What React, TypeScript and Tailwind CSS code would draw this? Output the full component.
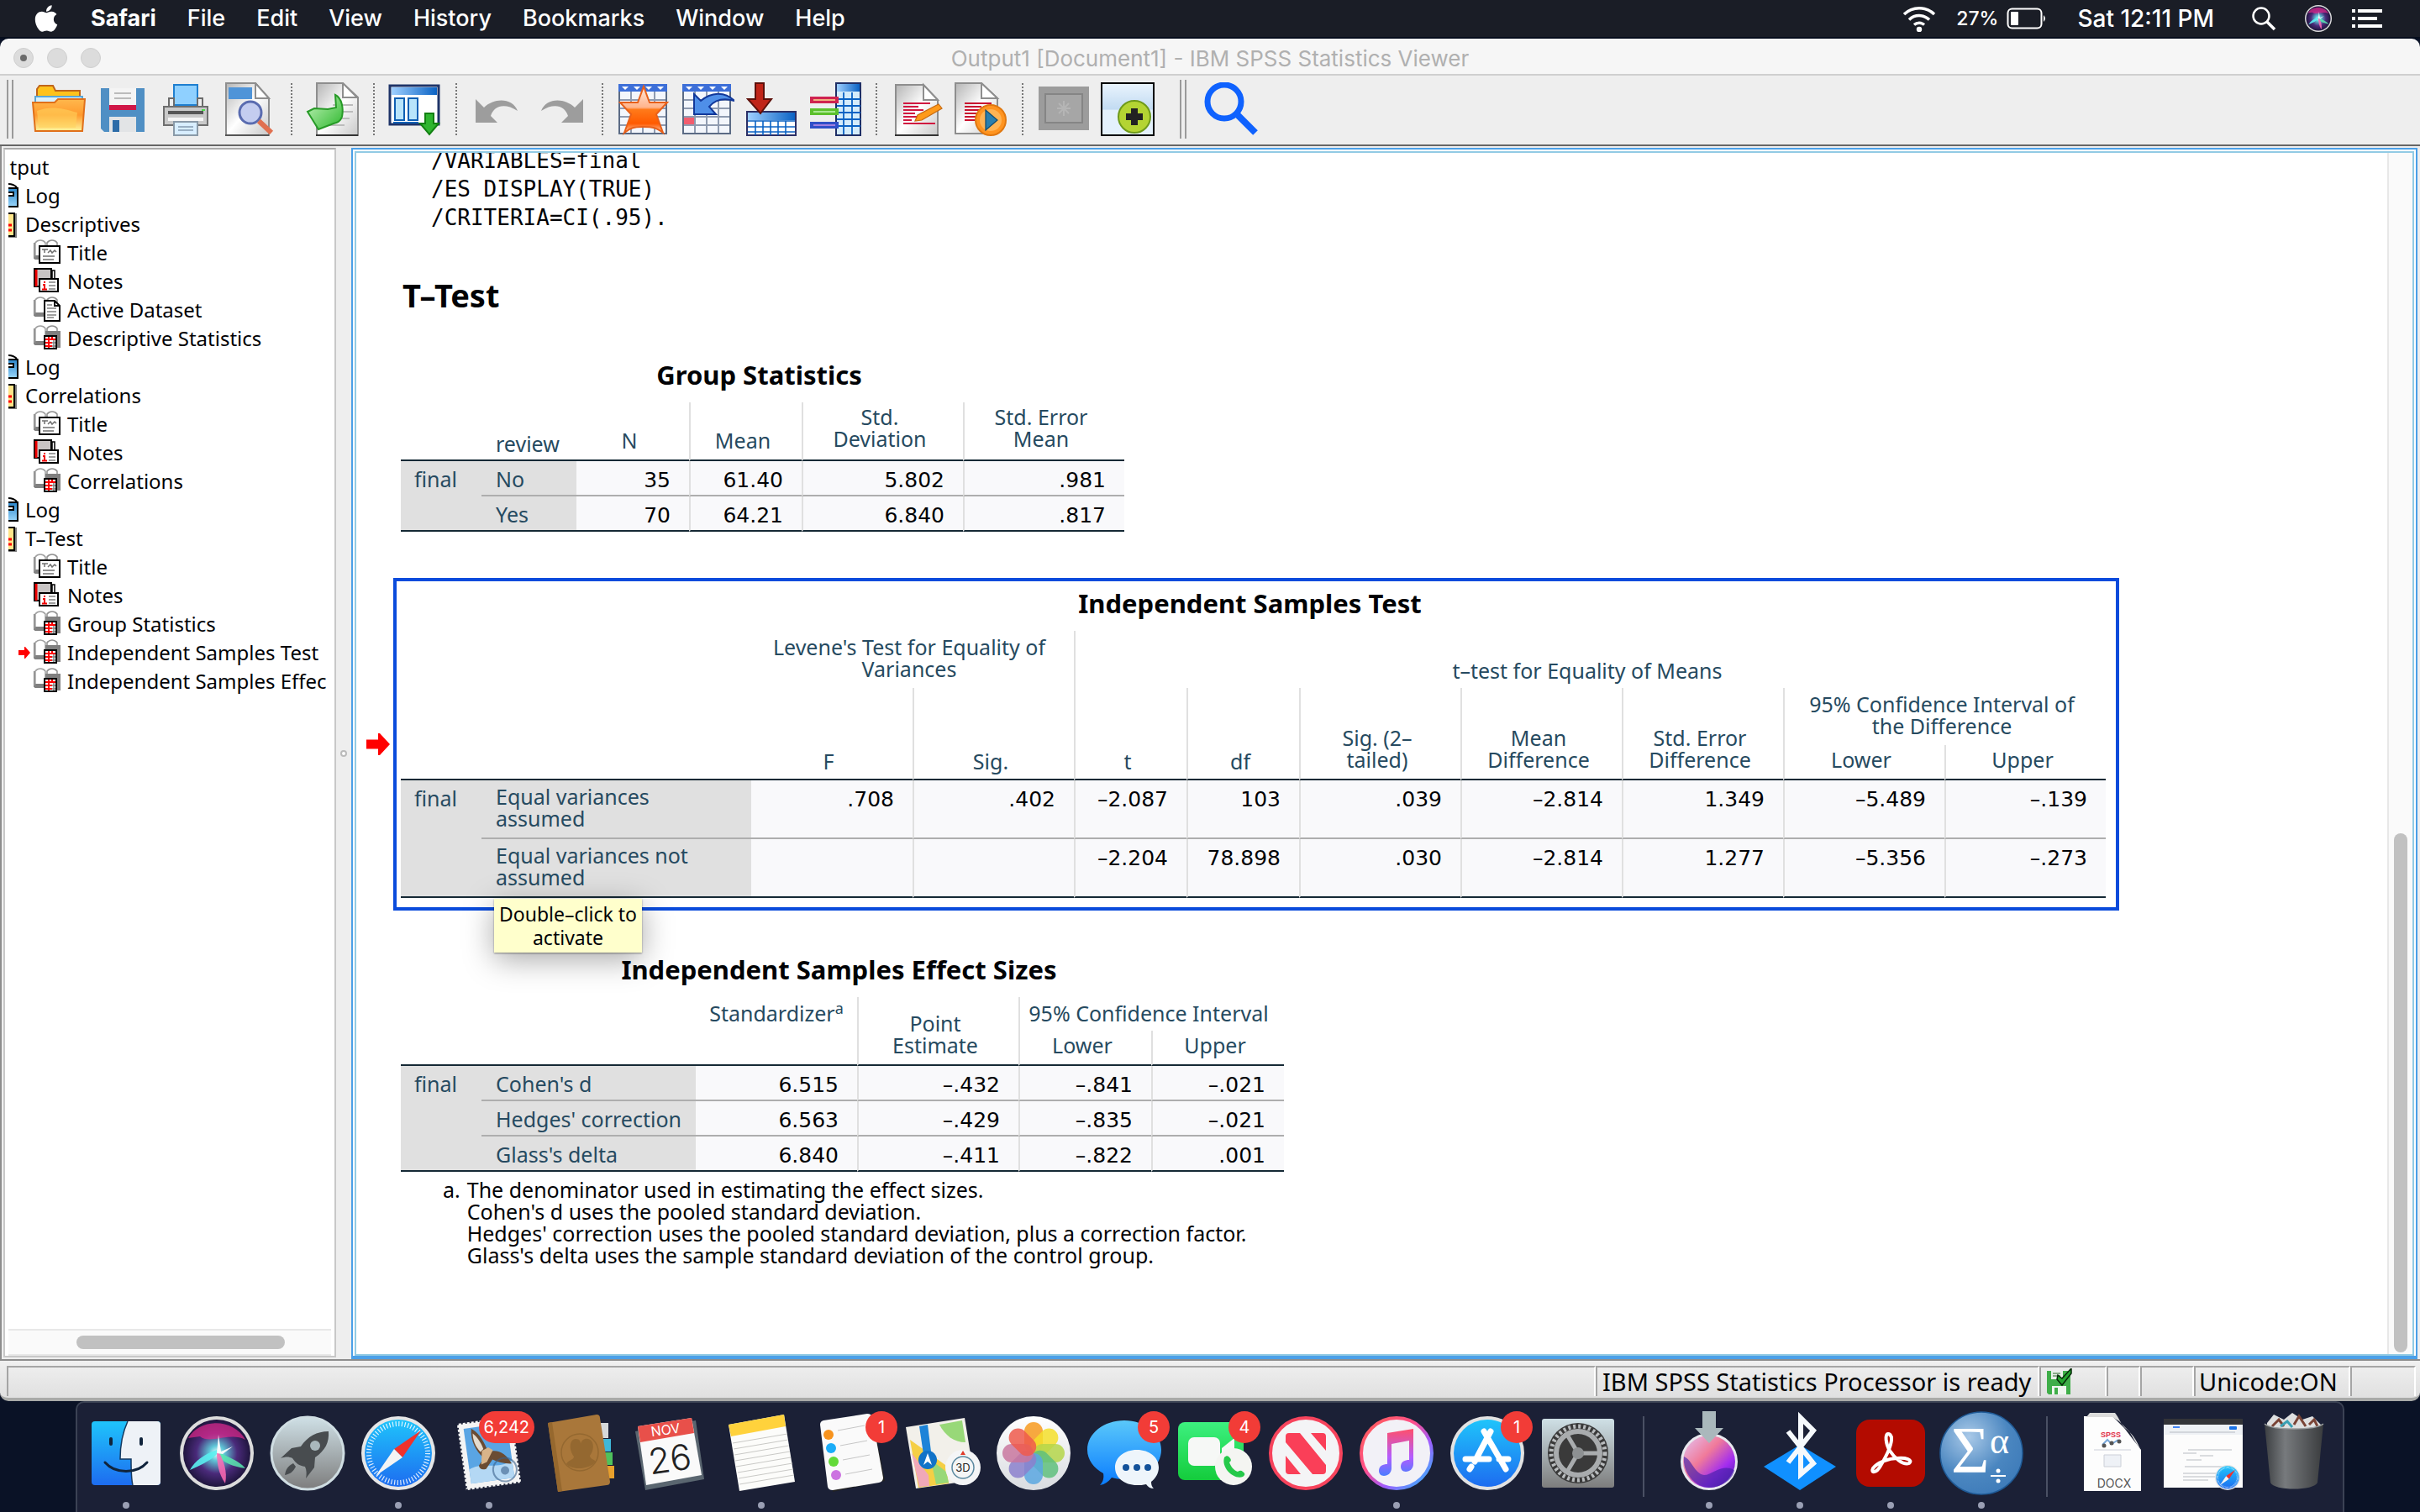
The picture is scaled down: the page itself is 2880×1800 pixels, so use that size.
import { ReactNode } from "react";
import { FaApple } from "react-icons/fa";

const MENUS = ["File", "Edit", "View", "History", "Bookmarks", "Window", "Help"];

type TreeKind = "root" | "log" | "book" | "title" | "notes" | "dataset" | "table";

const TREE: { kind: TreeKind; label: string; current?: boolean }[] = [
  { kind: "root", label: "Output" },
  { kind: "log", label: "Log" },
  { kind: "book", label: "Descriptives" },
  { kind: "title", label: "Title" },
  { kind: "notes", label: "Notes" },
  { kind: "dataset", label: "Active Dataset" },
  { kind: "table", label: "Descriptive Statistics" },
  { kind: "log", label: "Log" },
  { kind: "book", label: "Correlations" },
  { kind: "title", label: "Title" },
  { kind: "notes", label: "Notes" },
  { kind: "table", label: "Correlations" },
  { kind: "log", label: "Log" },
  { kind: "book", label: "T–Test" },
  { kind: "title", label: "Title" },
  { kind: "notes", label: "Notes" },
  { kind: "table", label: "Group Statistics" },
  { kind: "table", label: "Independent Samples Test", current: true },
  { kind: "table", label: "Independent Samples Effec" },
];

type HeadCell = {
  text: ReactNode;
  colSpan?: number;
  rowSpan?: number;
  line?: boolean;
  open?: boolean; // no rule under the cell
  className?: string;
};

type PivotTable = {
  title: string;
  widths: number[];
  head: HeadCell[][];
  rowHeight: string;
  labelPad: string;
  rows: { label: string; values: string[] }[];
};

const GROUP_STATS: PivotTable = {
  title: "Group Statistics",
  widths: [96, 113, 134, 134, 192, 192],
  rowHeight: "h-[42px]",
  labelPad: "pt-2",
  head: [
    [
      { text: "", className: "h-[70px]" },
      { text: "review", className: "text-left pl-[17px] pb-[6px]" },
      { text: "N", className: "pr-2 pb-[10px]" },
      { text: "Mean", line: true, className: "pr-2 pb-[10px]" },
      { text: "Std.\nDeviation", line: true, className: "pr-2 pb-3" },
      { text: "Std. Error\nMean", line: true, className: "pr-2 pb-3" },
    ],
  ],
  rows: [
    { label: "No", values: ["35", "61.40", "5.802", ".981"] },
    { label: "Yes", values: ["70", "64.21", "6.840", ".817"] },
  ],
};

const SAMPLES_TEST: PivotTable = {
  title: "Independent Samples Test",
  widths: [96, 321, 192, 192, 134, 134, 192, 192, 192, 192, 192],
  rowHeight: "h-[70px]",
  labelPad: "pt-[6px]",
  head: [
    [
      { text: "", colSpan: 2, rowSpan: 3 },
      {
        text: "Levene's Test for Equality of\nVariances",
        colSpan: 2,
        open: true,
        className: "h-[68px] pr-2 pb-[10px]",
      },
      { text: "t–test for Equality of Means", colSpan: 7, line: true, open: true, className: "pr-2 pb-2" },
    ],
    [
      { text: "F", rowSpan: 2, className: "pr-2 pb-2" },
      { text: "Sig.", rowSpan: 2, line: true, className: "pr-2 pb-2" },
      { text: "t", rowSpan: 2, line: true, className: "pr-2 pb-2" },
      { text: "df", rowSpan: 2, line: true, className: "pr-2 pb-2" },
      { text: "Sig. (2–\ntailed)", rowSpan: 2, line: true, className: "pr-2 pb-[10px]" },
      { text: "Mean\nDifference", rowSpan: 2, line: true, className: "pr-2 pb-[10px]" },
      { text: "Std. Error\nDifference", rowSpan: 2, line: true, className: "pr-2 pb-[10px]" },
      {
        text: "95% Confidence Interval of\nthe Difference",
        colSpan: 2,
        line: true,
        open: true,
        className: "h-[68px] pr-2 pb-[10px]",
      },
    ],
    [
      { text: "Lower", line: true, className: "h-[42px] pr-2 pb-[10px]" },
      { text: "Upper", line: true, className: "pr-2 pb-[10px]" },
    ],
  ],
  rows: [
    {
      label: "Equal variances\nassumed",
      values: [".708", ".402", "–2.087", "103", ".039", "–2.814", "1.349", "–5.489", "–.139"],
    },
    {
      label: "Equal variances not\nassumed",
      values: ["", "", "–2.204", "78.898", ".030", "–2.814", "1.277", "–5.356", "–.273"],
    },
  ],
};

const EFFECT_SIZES: PivotTable = {
  title: "Independent Samples Effect Sizes",
  widths: [96, 255, 192, 192, 158, 158],
  rowHeight: "h-[42px]",
  labelPad: "pt-2",
  head: [
    [
      { text: "", colSpan: 2, rowSpan: 2 },
      {
        text: (
          <>
            Standardizer<sup className="text-[18px]">a</sup>
          </>
        ),
        rowSpan: 2,
        className: "align-top pt-[6px]",
      },
      { text: "Point\nEstimate", rowSpan: 2, line: true, className: "align-bottom pr-2 pb-[10px]" },
      { text: "95% Confidence Interval", colSpan: 2, line: true, open: true, className: "h-10 pr-2 pb-2" },
    ],
    [
      { text: "Lower", line: true, className: "h-[42px] pr-2 pb-[10px]" },
      { text: "Upper", line: true, className: "pr-2 pb-[10px]" },
    ],
  ],
  rows: [
    { label: "Cohen's d", values: ["6.515", "–.432", "–.841", "–.021"] },
    { label: "Hedges' correction", values: ["6.563", "–.429", "–.835", "–.021"] },
    { label: "Glass's delta", values: ["6.840", "–.411", "–.822", ".001"] },
  ],
};

function StatTable({ table }: { table: PivotTable }) {
  return (
    <table className="table-fixed border-separate border-spacing-0 text-[25px] leading-[26px]">
      <caption className="mb-[13px] pr-2 text-[31px] leading-10 font-bold text-[#010205]">{table.title}</caption>
      <colgroup>
        {table.widths.map((w, i) => (
          <col key={i} style={{ width: w }} />
        ))}
      </colgroup>
      <thead className="align-bottom text-[#264a60]">
        {table.head.map((row, r) => (
          <tr key={r}>
            {row.map((cell, c) => (
              <th
                key={c}
                colSpan={cell.colSpan}
                rowSpan={cell.rowSpan}
                className={`font-normal whitespace-pre ${cell.open ? "" : "border-b-2 border-b-[#152935]"} ${
                  cell.line ? "border-l-2 border-l-[#e0e0e0]" : ""
                } ${cell.className ?? ""}`}
              >
                {cell.text}
              </th>
            ))}
          </tr>
        ))}
      </thead>
      <tbody>
        {table.rows.map((row, r) => {
          const last = r === table.rows.length - 1;
          const rule = last ? "border-b-2 border-b-[#152935]" : "border-b-2 border-b-[#aeaeae]";
          return (
            <tr key={row.label} className={table.rowHeight}>
              {r === 0 && (
                <th
                  rowSpan={table.rows.length}
                  className="border-b-2 border-b-[#152935] bg-[#e0e0e0] pt-2 pl-4 text-left align-top font-normal text-[#264a60]"
                >
                  final
                </th>
              )}
              <th
                className={`bg-[#e0e0e0] pl-[17px] text-left align-top font-normal whitespace-pre text-[#264a60] ${table.labelPad} ${rule}`}
              >
                {row.label}
              </th>
              {row.values.map((value, c) => (
                <td
                  key={c}
                  className={`bg-[#f9f9fb] pt-[10px] pr-[22px] text-right align-top font-['DejaVu_Sans',sans-serif] text-[#010205] ${rule} ${
                    c > 0 ? "border-l-2 border-l-[#e0e0e0]" : ""
                  }`}
                >
                  {value}
                </td>
              ))}
            </tr>
          );
        })}
      </tbody>
    </table>
  );
}

/* ---------- shared gradients ---------- */

function Gradients() {
  return (
    <svg className="absolute h-0 w-0" aria-hidden="true">
      <defs>
        <linearGradient id="gFolder" x1="0" y1="0" x2="0" y2="1">
          <stop offset="0" stopColor="#ffb84d" />
          <stop offset=".5" stopColor="#ff9a2e" />
          <stop offset="1" stopColor="#fff59a" />
        </linearGradient>
        <linearGradient id="gPaper" x1="0" y1="0" x2="1" y2="1">
          <stop offset="0" stopColor="#b5b5b5" />
          <stop offset=".5" stopColor="#ffffff" />
          <stop offset="1" stopColor="#c8c8c8" />
        </linearGradient>
        <linearGradient id="gHead" x1="0" y1="0" x2="1" y2="0">
          <stop offset="0" stopColor="#9fd0ff" />
          <stop offset="1" stopColor="#0a62c4" />
        </linearGradient>
        <linearGradient id="gBlue" x1="0" y1="0" x2="0" y2="1">
          <stop offset="0" stopColor="#1fc4fb" />
          <stop offset="1" stopColor="#1d6cf0" />
        </linearGradient>
        <linearGradient id="gMsg" x1="0" y1="0" x2="0" y2="1">
          <stop offset="0" stopColor="#5ac8fa" />
          <stop offset="1" stopColor="#0a7cff" />
        </linearGradient>
        <linearGradient id="gLog" x1="0" y1="0" x2="0" y2="1">
          <stop offset="0" stopColor="#2a86cc" />
          <stop offset="1" stopColor="#9ad6fa" />
        </linearGradient>
        <linearGradient id="gStar" x1="0" y1="0" x2="0" y2="1">
          <stop offset="0" stopColor="#ffe9dc" />
          <stop offset=".45" stopColor="#ffb48c" />
          <stop offset=".5" stopColor="#ff7a1a" />
          <stop offset=".8" stopColor="#ff5a00" />
          <stop offset="1" stopColor="#ffc9a8" />
        </linearGradient>
        <linearGradient id="gGreen" x1="0" y1="0" x2="1" y2="1">
          <stop offset="0" stopColor="#c8f5c0" />
          <stop offset="1" stopColor="#2db82d" />
        </linearGradient>
        <linearGradient id="gFace" x1="0" y1="0" x2="0" y2="1">
          <stop offset="0" stopColor="#3df07f" />
          <stop offset="1" stopColor="#14cc3c" />
        </linearGradient>
        <linearGradient id="gSilver" x1="0" y1="0" x2="0" y2="1">
          <stop offset="0" stopColor="#cfe0e6" />
          <stop offset="1" stopColor="#7d7d7d" />
        </linearGradient>
        <linearGradient id="gMusicRing" x1="0" y1="0" x2="1" y2="1">
          <stop offset="0" stopColor="#ff5f52" />
          <stop offset=".4" stopColor="#ff4f8a" />
          <stop offset=".65" stopColor="#a05cff" />
          <stop offset="1" stopColor="#1fc4fb" />
        </linearGradient>
        <linearGradient id="gNote" x1="0" y1="0" x2="0" y2="1">
          <stop offset="0" stopColor="#ff4f6a" />
          <stop offset=".6" stopColor="#b45cff" />
          <stop offset="1" stopColor="#4a7dff" />
        </linearGradient>
        <radialGradient id="gSiri" cx=".5" cy=".5" r=".55">
          <stop offset="0" stopColor="#e8ffff" />
          <stop offset=".2" stopColor="#5fc8d8" />
          <stop offset=".55" stopColor="#4a2a7a" />
          <stop offset="1" stopColor="#14102e" />
        </radialGradient>
        <linearGradient id="gWhite" x1="0" y1="0" x2="0" y2="1">
          <stop offset="0" stopColor="#ffffff" />
          <stop offset="1" stopColor="#d9dce0" />
        </linearGradient>
        <radialGradient id="gSpss" cx=".35" cy=".3" r=".8">
          <stop offset="0" stopColor="#a9c9e8" />
          <stop offset=".6" stopColor="#4a86c0" />
          <stop offset="1" stopColor="#3d7ab8" />
        </radialGradient>
        <linearGradient id="gMonterey" x1="0" y1="0" x2="1" y2="1">
          <stop offset="0" stopColor="#e3c6f5" />
          <stop offset=".4" stopColor="#f07a9a" />
          <stop offset=".7" stopColor="#a22cf0" />
          <stop offset="1" stopColor="#3b1a9c" />
        </linearGradient>
        <linearGradient id="gBin" x1="0" y1="0" x2="1" y2="0">
          <stop offset="0" stopColor="#3c3f42" />
          <stop offset=".35" stopColor="#777a7d" />
          <stop offset="1" stopColor="#3a3c3e" />
        </linearGradient>
        <linearGradient id="gPlus" x1="0" y1="0" x2="0" y2="1">
          <stop offset="0" stopColor="#eaf4fd" />
          <stop offset=".5" stopColor="#c2dbf2" />
          <stop offset=".52" stopColor="#e4f1fc" />
          <stop offset="1" stopColor="#e4f1fc" />
        </linearGradient>
      </defs>
    </svg>
  );
}

/* ---------- toolbar icons, 32 unit grid ---------- */

const Page = () => (
  <>
    <path d="M6.500.500H22L31 9v22.500H6.500z" fill="url(#gPaper)" stroke="#8e8e8e" />
    <path d="M22 .500V9h8.500z" fill="#fff" stroke="#8e8e8e" />
    <path d="M6 31.500h25" stroke="#333" />
  </>
);

const RedLines = () => (
  <path d="M10 12.500h16M10 14.500h10M21 14.500h3M10 16.500h14M10 18.500h8M10 20.500h11M10 22.500h6" stroke="#c8102e" />
);

const GridSheet = () => (
  <>
    <path d="M1.500 1.500h28v29h-28z" fill="#f3f6fc" stroke="#5b6b85" />
    <path d="M2 10.500h27M2 15.500h27M2 20.500h27M2 25.500h27M8.500 5v25M15.500 5v25M22.500 5v25" stroke="#8f9bb0" />
    <path d="M1 1h29v4.500H1z" fill="#3d6fd8" />
    <path d="M3 2.500h4L5 4.500zM10 2.500h4l-2 2zM17 2.500h4l-2 2zM24 2.500h4l-2 2z" fill="#fff" />
  </>
);

const TOOLS: Record<string, ReactNode> = {
  Open: (
    <>
      <path d="M3 8V4l1.500-2h8L14 5h14.500v5H3z" fill="#ffc21a" stroke="#c0651a" />
      <path d="M2 8.500h28v6H2z" fill="#d9f0fb" stroke="#5aa7d6" />
      <path d="M.500 12h13l2-2h16L30 29H2z" fill="url(#gFolder)" stroke="#e0701a" />
      <path d="M3 17c8-3 14-2 24 1l-1 9H4z" fill="#ffd25c" opacity=".6" />
    </>
  ),
  Save: (
    <>
      <path d="M3 3.500h26v26H5l-2-2z" fill="#4f8fc4" />
      <path d="M8 3.500h16v12H8z" fill="#f4f4f4" />
      <path d="M8 13.500h16v3H8z" fill="#d01848" />
      <path d="M11 6.500h10M11 9.500h10" stroke="#bbb" />
      <path d="M8 20.500h16v9H8z" fill="#e2e4e6" />
      <path d="M10 22.500h4v7h-4z" fill="#2d6ca8" />
    </>
  ),
  Print: (
    <>
      <path d="M8.500 1.500h14v12h-14z" fill="#8fd0ff" stroke="#1f7fd0" />
      <path d="M5.500 9.500h3v5h14v-5h3v5h-20z" fill="#eee" stroke="#6b6b6b" />
      <path d="M2.500 14.500h26v11h-26z" fill="#c9c9c9" stroke="#6e6e6e" />
      <path d="M5 18h21" stroke="#555" strokeWidth="2" />
      <path d="M5 22h21" stroke="#f5f5f5" strokeWidth="2" />
      <path d="M25 16.500h2" stroke="#4be04b" />
      <path d="M8.500 23.500h14v8h-14z" fill="#d8eeff" stroke="#8a9aa8" />
      <path d="M11 26.500h9M11 28.500h9" stroke="#9ab0c4" />
    </>
  ),
  "Print Preview": (
    <>
      <path d="M1.500.500H19l8 9v22H1.500z" fill="url(#gPaper)" stroke="#8e8e8e" />
      <path d="M3 3h14v7H3z" fill="#4f94d8" />
      <path d="M19 .500v9h8z" fill="#fff" stroke="#8e8e8e" />
      <circle cx="16" cy="18" r="6.500" fill="#c4cdf0" stroke="#5a6cb0" strokeWidth="1.500" />
      <path d="M21 23l7.500 7" stroke="#e07050" strokeWidth="3" />
      <path d="M1 31.500h26" stroke="#555" />
    </>
  ),
  Export: (
    <>
      <Page />
      <path d="M16 13.500h12M16 17.500h12M14 21.500h12M14 25.500h9" stroke="#bcbcbc" />
      <path
        d="M17.500 7.500c4 2 5 8 4 13-1 3-3 3.500-5 4L7.500 28 1 17.500l4-2 8 .500 5-1z"
        fill="url(#gGreen)"
        stroke="#279a27"
      />
    </>
  ),
  "Go to Data": (
    <>
      <path d="M1 2h29v23H1z" fill="#fff" stroke="#1f3468" strokeWidth="1.500" />
      <path d="M2 3h27v4.500H2z" fill="url(#gHead)" />
      <path d="M4 9.500h5.500v13H4zM12 9.500h5.500v13H12z" fill="#b8e4fb" stroke="#0f5fb4" />
      <path d="M3 24h15" stroke="#0f5fb4" />
      <path d="M22 18.500h5v6h3l-5.500 6.500-5.500-6.500h3z" fill="#2fb52f" stroke="#128012" />
    </>
  ),
  Undo: <path d="M3 10v14h13l-4-4c2-6 8-8 16-3-3-8-14-8-20-2z" fill="#9d9d9d" />,
  Redo: <path d="M29 10v14H16l4-4c-2-6-8-8-16-3 3-8 14-8 20-2z" fill="#9d9d9d" />,
  "Go to Case": (
    <>
      <GridSheet />
      <path
        d="M16 2.500l3.500 9.500H30l-6.500 7 4 11c-4-3-6-3.500-11.500-3.500S8 27 4.500 30l4-11L2 12h10.500z"
        fill="url(#gStar)"
        stroke="#e8601a"
      />
    </>
  ),
  "Go to Variable": (
    <>
      <GridSheet />
      <path d="M2 21h6v4H2z" fill="#f25c6e" />
      <path d="M8 7l4 4c6-5 14-6 20 0-7-2-12 0-15 3.500l4 4.500H8z" fill="#4f8fe8" stroke="#12389a" />
    </>
  ),
  Variables: (
    <>
      <path d="M1.500 17.500h29v14h-29z" fill="#fff" stroke="#2b2f66" />
      <path d="M2 18h28v4.500H2z" fill="url(#gHead)" />
      <path
        d="M2 23h28M2 26.500h28M2 29.500h28M6.500 23v8.500M11 23v8.500M15.500 23v8.500M20 23v8.500M24.500 23v8.500"
        stroke="#0a62c4"
        strokeWidth=".8"
      />
      <path d="M6.500.500h5v9.500h4.500L9.500 18.500 2 10h4.500z" fill="#c02418" stroke="#5e100a" />
    </>
  ),
  "Value Labels": (
    <>
      <path d="M16.500.500h14.500v31H16.500z" fill="#d4ecfb" stroke="#1f2f66" />
      <path d="M17 1h13.500v4.500H17z" fill="url(#gHead)" />
      <path d="M17 10h14M17 14h14M17 18h14M17 22h14M17 26h14M21 6v25M26 6v25" stroke="#0a62c4" strokeWidth=".9" />
      <path d="M1 8.500h17v4H1z" fill="#cf2350" />
      <path d="M3 10.500h13" stroke="#f0b080" />
      <path d="M1 15.500h17v4H1z" fill="#5cc02c" />
      <path d="M3 17.500h13" stroke="#a8e890" />
      <path d="M1 23.500h17v4H1z" fill="#2f50c8" />
      <path d="M3 25.500h13" stroke="#a080e0" />
    </>
  ),
  "Edit Script": (
    <g transform="translate(1.500 0)">
      <path d="M1.500 1.500H18l8.500 9v21h-25z" fill="url(#gPaper)" stroke="#8e8e8e" />
      <path d="M18 1.500v9h8.500z" fill="#fff" stroke="#8e8e8e" />
      <path d="M6 12.500h16M6 14.500h9M6 16.500h12M6 18.500h7M6 20.500h9M6 22.500h5M6 24.500h19" stroke="#d01840" />
      <path d="M13 23l1.500-3.500L27 13l2 2.500-12 7z" fill="#ff9a1a" stroke="#c86a10" strokeWidth=".6" />
      <path d="M1 31.500h26" stroke="#333" />
    </g>
  ),
  "Run Script": (
    <>
      <path d="M.500.500H16l9.500 9v21H.500z" fill="url(#gPaper)" stroke="#8e8e8e" />
      <path d="M16 .500v9h9.500z" fill="#fff" stroke="#8e8e8e" />
      <g transform="translate(-4 0)">
        <RedLines />
      </g>
      <circle cx="21.500" cy="22.500" r="9" fill="#ff9420" stroke="#e07810" />
      <circle cx="21.500" cy="22.500" r="6.500" fill="#ffb454" />
      <path d="M18.500 16.500v12l7-6z" fill="#2a7fae" stroke="#0e4a70" strokeWidth=".6" />
    </>
  ),
  "Designate Window": (
    <>
      <path d="M1 2.500h30v26H1z" fill="#9c9c9c" />
      <path d="M5 7h22v17H5z" fill="#a6a6a6" stroke="#858585" />
      <path d="M16 11v9M12 15.500h8M13 12.500l6 6M19 12.500l-6 6" stroke="#b5b5b5" />
    </>
  ),
  "Add Output": (
    <>
      <path d="M.500.500h31v31H.500z" fill="url(#gPlus)" stroke="#000" />
      <circle cx="20" cy="20.500" r="9.500" fill="#b4d433" stroke="#6f9a1a" />
      <path d="M20 15.500v10M15 20.500h10" stroke="#222" strokeWidth="4" />
    </>
  ),
  Search: (
    <>
      <circle cx="12" cy="11.500" r="10" fill="none" stroke="#0f62fe" strokeWidth="3.500" />
      <path d="M19.500 19l11 11" stroke="#0f62fe" strokeWidth="4" />
    </>
  ),
};

const TOOL_GROUPS = [
  ["Open", "Save", "Print", "Print Preview"],
  ["Export"],
  ["Go to Data"],
  ["Undo", "Redo"],
  ["Go to Case", "Go to Variable", "Variables", "Value Labels"],
  ["Edit Script", "Run Script"],
  ["Designate Window", "Add Output"],
];

function ToolButton({ name }: { name: string }) {
  return (
    <button aria-label={name} className="flex w-[76px] items-center justify-center">
      <svg viewBox="0 0 32 32" className="h-16 w-16">
        {TOOLS[name]}
      </svg>
    </button>
  );
}

const Grip = () => <div className="h-[70px] w-2 border-x-2 border-[#9a9a9a]" />;

function Toolbar() {
  return (
    <div className="flex h-[84px] shrink-0 items-center border-b-2 border-[#666] bg-[#eee] pb-[2px] pl-2">
      <Grip />
      <div className="w-4" />
      {TOOL_GROUPS.map((group, i) => (
        <div key={i} className="flex items-center">
          {i > 0 && (
            <div className="flex w-[22px] justify-center">
              <div className="h-[62px] border-l-2 border-dotted border-[#777]" />
            </div>
          )}
          {group.map((name) => (
            <ToolButton key={name} name={name} />
          ))}
        </div>
      ))}
      <div className="w-6" />
      <Grip />
      <div className="w-[15px]" />
      <ToolButton name="Search" />
    </div>
  );
}

/* ---------- outline tree ---------- */

const OpenBook = () => (
  <>
    <path d="M.500 4v18h14" fill="#fff" stroke="#808080" strokeWidth="2" />
    <path d="M2 4c3-4 9-4 12 0v18H2z" fill="#fff" stroke="#a0a0a0" strokeWidth="1.500" />
    <path d="M2 19h12v5H1z" fill="#808080" />
    <path d="M16 4c3-4 9-4 12 0v6H16z" fill="#fff" stroke="#909090" strokeWidth="1.500" />
  </>
);

const TREE_ICONS: Record<TreeKind, ReactNode> = {
  root: null,
  log: (
    <>
      <path d="M20 2q6 0 10 4" fill="none" stroke="#000" strokeWidth="2" />
      <path d="M9 7h22v22H9z" fill="url(#gLog)" stroke="#000" strokeWidth="2" />
      <path d="M18 12h8v4h-8" fill="#fff" stroke="#000" strokeWidth="2" />
    </>
  ),
  book: (
    <>
      <path d="M8 3h22v29H8z" fill="#808080" />
      <path d="M7 3h20v27H7z" fill="#ffe58a" stroke="#000" strokeWidth="2" />
      <path d="M10 17h14M10 23h14" stroke="#f00" strokeWidth="3" />
    </>
  ),
  title: (
    <>
      <OpenBook />
      <path d="M7 8h24v20H7z" fill="#fff" stroke="#000" strokeWidth="2" />
      <path
        d="M10 12h7M13 12v4M17 16l3-3 2 3 3-3 2 2M11 20h14M11 24h13"
        fill="none"
        stroke="#707070"
        strokeWidth="1.500"
      />
    </>
  ),
  notes: (
    <>
      <path d="M1 1h20v21H1z" fill="#c8c4c4" stroke="#000" strokeWidth="2" />
      <path d="M3 2v20" stroke="#e00" strokeWidth="3" />
      <path d="M22 3h3v20h-3z" fill="#fff" stroke="#000" strokeWidth="1.500" />
      <path d="M7 13h22v15H7z" fill="#fff" stroke="#000" strokeWidth="2" />
      <path d="M13 16v2M11 20h2v5M10 25.500h6" fill="none" stroke="#e00" strokeWidth="2" />
      <path d="M18 17h8M18 21h8M18 25h8" stroke="#808080" strokeWidth="1.500" />
    </>
  ),
  dataset: (
    <>
      <OpenBook />
      <path d="M13 5h12l6 6v18H13z" fill="#fff" stroke="#000" strokeWidth="2" />
      <path d="M25 5v6h6" fill="none" stroke="#000" strokeWidth="2" />
      <path d="M16 10h6M16 14h11M16 18h11M16 22h11M16 25h8" stroke="#808080" strokeWidth="1.500" />
    </>
  ),
  table: (
    <>
      <OpenBook />
      <path d="M14 7h18v20H14z" fill="#808080" />
      <path d="M13 13h14v15H13z" fill="#fff" stroke="#000" strokeWidth="2" />
      <path d="M14 17h12M14 21h8M14 25h8M18 14v13M22 14v4" stroke="#f00" strokeWidth="2" />
      <path d="M22 21h4M22 25h4M24 18v9" stroke="#808080" strokeWidth="1.500" />
    </>
  ),
};

function RedArrow({ className }: { className: string }) {
  return (
    <svg viewBox="0 0 14 12" preserveAspectRatio="none" className={className}>
      <path d="M0 3.500h7V0h1l6 6-6 6H7V8.500H0z" fill="#f00" />
    </svg>
  );
}

function Outline() {
  return (
    <nav className="mb-[2px] flex w-[396px] shrink-0 flex-col border-2 border-[#c8c8c8] border-t-[#aaa] bg-white px-1">
      {/* The tree is scrolled a little to the right, so its first column is cut off */}
      <div className="flex-1 overflow-hidden pt-1">
        <ul className="-ml-8 text-[24px] leading-[34px] text-[#010205]">
          {TREE.map((item, i) => {
            const top = item.kind === "log" || item.kind === "book";
            const pad = item.kind === "root" ? "" : top ? "pl-3" : "pl-[62px]";
            return (
              <li key={i} className="relative">
                {item.current && <RedArrow className="absolute top-[10px] left-[44px] h-[14px] w-[14px]" />}
                <button className={`flex h-[34px] w-full items-center gap-2 whitespace-nowrap ${pad}`}>
                  {item.kind !== "root" && (
                    <svg viewBox="0 0 32 32" className="h-8 w-8 shrink-0">
                      {TREE_ICONS[item.kind]}
                    </svg>
                  )}
                  {item.label}
                </button>
              </li>
            );
          })}
        </ul>
      </div>
      <div className="flex h-8 shrink-0 items-center border-y-2 border-[#e8e8e8] bg-[#fafafa] pl-[81px]">
        <div className="h-4 w-[248px] rounded-full bg-[#c1c1c1]" />
      </div>
    </nav>
  );
}

/* ---------- output pane ---------- */

function OutputPane() {
  return (
    <main className="flex min-w-0 flex-1 border-t-2 border-r-2 border-b-4 border-l-2 border-[#4ba0e8] bg-white p-[2px] pb-0">
      <div className="flex min-w-0 flex-1 border-2 border-[#92cbe4]">
        <div className="min-w-0 flex-1 overflow-hidden pl-[12px] text-[#010205]">
          <pre className="-mt-2 ml-[77px] font-['DejaVu_Sans_Mono',monospace] text-[26px] leading-[34px]">
            {"/VARIABLES=final\n/ES DISPLAY(TRUE)\n/CRITERIA=CI(.95)."}
          </pre>
          <h1 className="mt-[55px] ml-[43px] text-[38px] leading-10 font-bold">T–Test</h1>
          <div className="mt-[55px] ml-[41px] w-fit">
            <StatTable table={GROUP_STATS} />
          </div>
          <div className="mt-[55px] flex items-center gap-1">
            <RedArrow className="h-[26px] w-7" />
            <div className="relative w-fit border-4 border-[#0a4bdc] pt-[6px] pr-3 pb-[11px] pl-[5px]">
              <StatTable table={SAMPLES_TEST} />
              <div
                role="tooltip"
                className="absolute top-[378px] left-[116px] w-[176px] bg-[#ffffcc] pt-1 pb-1 text-center text-[23px] leading-7 shadow-[0_8px_36px_rgba(0,0,0,0.35),0_1px_2px_rgba(0,0,0,0.4)]"
              >
                Double–click to activate
              </div>
            </div>
          </div>
          <div className="mt-[50px] ml-[41px] w-fit">
            <StatTable table={EFFECT_SIZES} />
          </div>
          <div className="mt-2 ml-[91px] flex gap-2 text-[25px] leading-[26px]">
            <span>a.</span>
            <p className="whitespace-pre">
              {
                "The denominator used in estimating the effect sizes.\nCohen's d uses the pooled standard deviation.\nHedges' correction uses the pooled standard deviation, plus a correction factor.\nGlass's delta uses the sample standard deviation of the control group."
              }
            </p>
          </div>
        </div>
        <div className="flex w-[30px] shrink-0 flex-col items-center justify-end border-l-2 border-[#e8e8e8] bg-[#fafafa] pb-[2px]">
          <div className="h-[618px] w-4 rounded-full bg-[#c1c1c1]" />
        </div>
      </div>
    </main>
  );
}

/* ---------- status bar ---------- */

const STATUS_CELL = "flex h-9 items-center border-t-2 border-l-2 border-[#a5a5a5] border-r-2 border-r-white";

function StatusBar() {
  return (
    <footer className="flex h-12 shrink-0 items-start rounded-b-[10px] border-b-4 border-[#a9aaa8] bg-gradient-to-b from-[#f0f0f0] to-[#e0e0e0] pt-[6px] pr-[5px] pl-2 text-[29px] leading-[34px] text-[#010205]">
      <div className={`${STATUS_CELL} flex-1`} />
      <div className={`${STATUS_CELL} w-[528px] pl-[6px] whitespace-nowrap`}>IBM SPSS Statistics Processor is ready</div>
      <div className={`${STATUS_CELL} w-20 pl-[6px]`}>
        <svg viewBox="0 0 32 32" className="h-8 w-8">
          <path d="M1 3h28v28H3l-2-2z" fill="#3fae49" />
          <path d="M6 3h14v10H6z" fill="#e8f0e8" />
          <path d="M8 6h9M8 9h9" stroke="#8a8" strokeWidth="2" />
          <path d="M7 21h17v10H7z" fill="#eef5ee" />
          <path d="M10 23h4v8h-4z" fill="#3fae49" />
          <path d="M14 8l5 4L30 0v6L19 20l-6-7z" fill="#25a52f" stroke="#052a08" strokeWidth="1.500" />
        </svg>
      </div>
      <div className={`${STATUS_CELL} w-10`} />
      <div className={`${STATUS_CELL} w-16`} />
      <div className={`${STATUS_CELL} w-[186px] pl-1`}>Unicode:ON</div>
      <div className={`${STATUS_CELL} w-[78px]`} />
    </footer>
  );
}

/* ---------- dock icons, 88 unit grid ---------- */

const Compass = () => (
  <>
    <circle cx="44" cy="44" r="44" fill="#e6e6e6" />
    <circle cx="44" cy="44" r="40" fill="url(#gBlue)" />
    <circle
      cx="44"
      cy="44"
      r="35"
      fill="none"
      stroke="#fff"
      strokeWidth="6"
      strokeDasharray="1.200 2.465"
      opacity=".85"
    />
    <path d="M71 17L49 49 39 39z" fill="#f0322c" />
    <path d="M17 71l32-22-10-10z" fill="#f4f4f4" />
  </>
);

const PETALS = ["#f79a1e", "#f5df2c", "#b5d64a", "#5fbf7d", "#5aa7e0", "#8b80cc", "#c9779f", "#ee5a4c"];

const SiriOrb = () => (
  <>
    <circle cx="44" cy="44" r="44" fill="#dcdcdc" />
    <circle cx="44" cy="44" r="40" fill="url(#gSiri)" />
    <path d="M10 26C24 2 64 2 78 28 60 18 36 34 24 24z" fill="#e0288c" opacity=".7" />
    <path d="M44 40c-12 4-26 12-32 24 14-6 26-12 33-20z" fill="#5af0f0" opacity=".9" />
    <path d="M46 42c8 6 24 10 32 20-14-2-26-6-33-16z" fill="#5ae8b0" opacity=".85" />
    <path d="M44 42c0 14 2 26 10 38 3-14-2-28-8-38z" fill="#ff6ab4" opacity=".85" />
    <path d="M44 44l2-22 3 20 14-6-12 9z" fill="#fff" opacity=".9" />
  </>
);

type DockItem = { name: string; art: ReactNode; badge?: string; running?: boolean };

const DOCK: (DockItem | null)[] = [
  {
    name: "Finder",
    running: true,
    art: (
      <>
        <rect x="3" y="6" width="82" height="76" rx="4" fill="url(#gBlue)" />
        <path d="M46 6h35a4 4 0 014 4v68a4 4 0 01-4 4H52c-2-8-2-18-2-31H37c0-18 3-32 9-45z" fill="#eef2f7" />
        <path d="M46 6c-6 13-9 27-9 45h13c0 13 0 23 2 31" fill="none" stroke="#14395f" strokeWidth="1.500" />
        <path d="M26 27v6M62 27v6" stroke="#10243c" strokeWidth="4" strokeLinecap="round" />
        <path d="M19 55c12 14 38 14 50 0" fill="none" stroke="#10243c" strokeWidth="3" strokeLinecap="round" />
      </>
    ),
  },
  { name: "Siri", art: <SiriOrb /> },
  {
    name: "Launchpad",
    art: (
      <>
        <circle cx="44" cy="44" r="43" fill="url(#gSilver)" stroke="#cfdde2" strokeWidth="3" />
        <path
          d="M69 18c-14 0-25 6-33 18l-11 2-13 12c6-2 10-2 14 0 4 6 8 9 15 10 2 4 2 9 1 14l10-13 1-12c12-8 17-18 16-31z"
          fill="#484c4f"
        />
        <circle cx="53" cy="35" r="6" fill="#a9b8bd" />
        <path d="M27 56c-6 3-9 7-10 14 6-1 10-4 13-10z" fill="#484c4f" />
      </>
    ),
  },
  { name: "Safari", running: true, art: <Compass /> },
  {
    name: "Mail",
    running: true,
    badge: "6,242",
    art: (
      <g transform="rotate(-8 44 44)">
        <rect x="11" y="4" width="66" height="80" fill="#f4f4f4" />
        <rect x="11" y="4" width="66" height="80" fill="none" stroke="#1b2036" strokeWidth="3" strokeDasharray="2 3" />
        <rect x="18" y="11" width="52" height="66" fill="#5aa5e4" />
        <path d="M18 60c16-8 34 6 52-4v21H18z" fill="#b4d8f4" />
        <path
          d="M27 12c7 5 12 14 15 26l6 4c9 0 17 7 21 18-9-1-16-4-22-8l-9 10c-5 1-8-1-8-5l7-8c-8-10-13-22-10-37z"
          fill="#6b4c33"
        />
        <path d="M28 18c4 4 8 11 10 20l-4 3c-5-7-7-15-6-23z" fill="#e4dccf" />
        <path d="M36 40l8-3 5 4-9 13-7 2z" fill="#d8b48a" />
        <circle cx="60" cy="66" r="14" fill="none" stroke="#3a608a" strokeWidth="2" opacity=".6" />
        <circle cx="60" cy="67" r="5" fill="#3a608a" opacity=".6" />
      </g>
    ),
  },
  {
    name: "Contacts",
    art: (
      <>
        <path d="M66 8h12v18H68z" fill="#d5d8da" />
        <path d="M69 27h12v15H70z" fill="#3fb7d8" />
        <path d="M71 43h12v15H72z" fill="#4fc25c" />
        <path d="M73 59h12v15H74z" fill="#e8a02c" />
        <path d="M6 8L64-2c3 0 4 2 4 4l12 76c0 3-2 4-4 4l-58 8z" fill="#a9773a" />
        <path d="M6 8l5-1 12 82-5 1z" fill="#96682e" />
        <circle cx="44" cy="43" r="22" fill="none" stroke="#946830" strokeWidth="1.500" />
        <path
          d="M28 57c2-5 9-5 9-9-6-8-6-20 2-21 5 0 6 3 6 6 1-5 5-7 9-6 8 2 7 14 2 20 0 4 5 4 7 7-7 9-27 11-35 3z"
          fill="#946830"
        />
      </>
    ),
  },
  {
    name: "Calendar",
    art: (
      <>
        <path d="M2 18L74 5l10 70-70 13z" fill="#5a6670" />
        <path d="M5 12L69 2l12 68-66 12z" fill="#fafafa" />
        <path d="M5 12L69 2l3 18L8 31z" fill="#e8504a" />
        <text
          x="38"
          y="22"
          fontSize="16"
          fill="#fff"
          textAnchor="middle"
          fontFamily="Inter"
          transform="rotate(-8 38 16)"
        >
          NOV
        </text>
        <text
          x="43"
          y="66"
          fontSize="42"
          fill="#222"
          textAnchor="middle"
          fontFamily="Inter"
          fontWeight="300"
          transform="rotate(-8 43 50)"
        >
          26
        </text>
      </>
    ),
  },
  {
    name: "Notes",
    running: true,
    art: (
      <>
        <path d="M5 10L71-2l13 80-66 11z" fill="#fcfcfa" />
        <path d="M5 10L71-2l2 14L8 24z" fill="#ffd23c" />
        <path
          d="M10 32l65-11M11 39l65-11M12 46l65-11M13 53l65-11M14 60l65-11M16 67l65-11M17 74l65-11M18 81l65-11"
          stroke="#c9c9c6"
          strokeWidth="1"
        />
      </>
    ),
  },
  {
    name: "Reminders",
    badge: "1",
    art: (
      <>
        <path d="M12 20L70 8l13 69-62 13z" fill="#222" />
        <path d="M6 10q0-4 4-5L62-3q5 0 6 4l13 72q0 5-5 6l-55 9q-5 0-6-4z" fill="#fafafa" />
        <path d="M27 17l32-6M30 35l32-6M33 52l32-6M36 69l32-6" stroke="#c6c6c6" />
        <circle cx="16" cy="22" r="6" fill="#f7931e" />
        <circle cx="19" cy="38" r="6" fill="#1badf8" />
        <circle cx="22" cy="54" r="6" fill="#63da38" />
        <circle cx="25" cy="70" r="6" fill="#cc73e1" />
      </>
    ),
  },
  {
    name: "Maps",
    art: (
      <>
        <path d="M0 13L70 2l12 74-70 10z" fill="#f2f0ea" />
        <path d="M40 10l27-5 4 26c-14 0-24-8-31-21z" fill="#98d878" />
        <path d="M5 28l42 30 4 22-36 5z" fill="#f5cf45" />
        <path d="M7 44l20 26 1 13-12 1z" fill="#f0a8b8" />
        <path d="M30 52l18 14 3 13-15 2z" fill="#98d878" />
        <path d="M16 12l10-2 5 40-9 2z" fill="#1d83d8" />
        <circle cx="26" cy="52" r="11" fill="#1273c8" />
        <path d="M26 44l5 14-5-4-5 4z" fill="#fff" />
        <circle cx="68" cy="61" r="21" fill="#f4f5f6" />
        <circle cx="68" cy="61" r="13" fill="none" stroke="#5b89a0" strokeWidth="1.500" />
        <path d="M68 41l3 5h-6z" fill="#e03a2a" />
        <text x="68" y="66" fontSize="13" fill="#222" textAnchor="middle" fontFamily="Inter">
          3D
        </text>
      </>
    ),
  },
  {
    name: "Photos",
    art: (
      <>
        <circle cx="44" cy="44" r="44" fill="url(#gWhite)" />
        {PETALS.map((color, i) => (
          <rect
            key={color}
            x="33"
            y="7"
            width="22"
            height="37"
            rx="11"
            fill={color}
            opacity=".85"
            transform={`rotate(${i * 45} 44 44)`}
          />
        ))}
      </>
    ),
  },
  {
    name: "Messages",
    badge: "5",
    art: (
      <>
        <path
          d="M44 5c24 0 44 15 44 35S68 75 44 75c-6 0-11-1-15-2-4 5-8 8-14 9 4-4 5-9 4-14C8 62 0 52 0 40 0 20 20 5 44 5z"
          fill="url(#gMsg)"
        />
        <path
          d="M59 40c15 0 26 9 26 21 0 7-4 13-9 17 0 4 1 6 3 8-4 0-7-2-9-5-4 1-7 1-11 1-15 0-26-9-26-21s11-21 26-21z"
          fill="#eef5fb"
        />
        <circle cx="46" cy="61" r="4" fill="#14529a" />
        <circle cx="59" cy="61" r="4" fill="#14529a" />
        <circle cx="72" cy="61" r="4" fill="#14529a" />
      </>
    ),
  },
  {
    name: "FaceTime",
    badge: "4",
    art: (
      <>
        <rect x="0" y="7" width="78" height="69" rx="8" fill="url(#gFace)" />
        <rect x="12" y="25" width="38" height="34" rx="7" fill="#f6f8f6" />
        <path d="M52 38l15-12v34L52 48z" fill="#f6f8f6" />
        <circle cx="66" cy="60" r="22" fill="#f4f5f2" />
        <path
          d="M55 49c3-3 5-2 7 1s0 4-1 5c2 5 5 9 10 11 2-1 4-2 6 0 3 2 3 4 0 6-10 4-26-10-22-23z"
          fill="#25c94a"
        />
      </>
    ),
  },
  {
    name: "News",
    art: (
      <>
        <circle cx="44" cy="44" r="42" fill="#f4f4f6" stroke="#f7435c" strokeWidth="4" />
        <path
          d="M20 24q0-4 4-4h13l31 38v7q0 4-4 4H52L20 31zM50 20h14q4 0 4 4v17zM20 47l18 22H24q-4 0-4-4z"
          fill="#fa3f58"
        />
      </>
    ),
  },
  {
    name: "Music",
    running: true,
    art: (
      <>
        <circle cx="44" cy="44" r="42" fill="#f2f1f7" stroke="url(#gMusicRing)" strokeWidth="4" />
        <path
          d="M33 20l31-5v42c0 5-4 9-9 9-4 0-6-3-6-6 0-6 5-8 10-8V29l-21 4v29c0 5-4 9-9 9-4 0-6-3-6-6 0-6 5-8 10-8z"
          fill="url(#gNote)"
        />
      </>
    ),
  },
  {
    name: "App Store",
    badge: "1",
    art: (
      <>
        <circle cx="44" cy="44" r="44" fill="#e2e2e2" />
        <circle cx="44" cy="44" r="40" fill="url(#gBlue)" />
        <path
          d="M48 18L29 54M40 18l26 45M25 60l-2 3M18 51h28M58 51h11"
          stroke="#fff"
          strokeWidth="7"
          strokeLinecap="round"
        />
      </>
    ),
  },
  {
    name: "System Preferences",
    art: (
      <>
        <rect x="1" y="3" width="86" height="82" rx="3" fill="url(#gSilver)" />
        <circle cx="44" cy="44" r="36" fill="#3a3a3a" />
        <circle cx="44" cy="44" r="32" fill="none" stroke="#b9bcbe" strokeWidth="5" strokeDasharray="3 3.030" />
        <circle cx="44" cy="44" r="26" fill="none" stroke="#a9acae" strokeWidth="6" />
        <path d="M44 44h26M44 44L31 22M44 44L31 66" stroke="#a9acae" strokeWidth="5" />
        <circle cx="44" cy="44" r="7" fill="#8d9092" />
      </>
    ),
  },
  null,
  {
    name: "macOS Installer",
    running: true,
    art: (
      <>
        <circle cx="44" cy="54" r="34" fill="#e8e8ee" />
        <circle cx="44" cy="54" r="31" fill="url(#gMonterey)" />
        <path d="M14 48c10 4 12 20 24 22 10 0 20-14 36-6-2 12-16 21-30 21S12 70 14 48z" fill="#4420a8" opacity=".65" />
        <path d="M36-6h16v20h9L44 32 27 14h9z" fill="#aab8bc" />
      </>
    ),
  },
  {
    name: "Bluetooth",
    running: true,
    art: (
      <>
        <path d="M44 34l43 26-43 28L1 60z" fill="#1090ff" />
        <path
          d="M30 20l30 38-15 13V4l15 15-30 38"
          fill="none"
          stroke="#f6f9fc"
          strokeWidth="6"
          transform="translate(0 -2)"
        />
      </>
    ),
  },
  {
    name: "Acrobat Reader",
    running: true,
    art: (
      <>
        <rect x="3" y="4" width="82" height="80" rx="16" fill="#b30b00" />
        <path
          d="M41 21c-4 0-3 12 2 20s16 18 23 15c5-4-4-7-14-6-10 0-24 5-29 12-3 6 4 6 9-3 6-10 14-25 13-34-1-3-3-4-4-4z"
          fill="none"
          stroke="#fff"
          strokeWidth="4"
        />
      </>
    ),
  },
  {
    name: "SPSS Statistics",
    running: true,
    art: (
      <>
        <circle cx="44" cy="44" r="49" fill="url(#gSpss)" stroke="#1f5a96" strokeWidth="1.500" />
        <text x="8" y="66" fontSize="78" fill="#fff" fontFamily="Liberation Serif">
          Σ
        </text>
        <text x="54" y="44" fontSize="44" fill="#fff" fontFamily="Liberation Serif">
          α
        </text>
        <path d="M55 71h18" stroke="#fff" strokeWidth="2" />
        <circle cx="64" cy="65" r="2.500" fill="#fff" />
        <circle cx="64" cy="77" r="2.500" fill="#fff" />
      </>
    ),
  },
  null,
  {
    name: "Documents",
    art: (
      <>
        <path d="M10 0h34l14 14 20 26v49H10z" fill="#fdfdfd" />
        <path d="M17-4h30c5 6 6 12 12 18 8 6 14 14 19 28L64 18 52 6 44 1H13z" fill="#dcdcdc" />
        <text
          x="42"
          y="25"
          fontSize="9"
          fill="#e0304a"
          textAnchor="middle"
          fontFamily="Liberation Sans"
          fontWeight="700"
        >
          SPSS
        </text>
        <path d="M32 34l6-6 5 5 8-5" fill="none" stroke="#7aa8d8" strokeWidth="2" />
        <circle cx="34" cy="35" r="2.500" fill="#555" />
        <circle cx="43" cy="32" r="2.500" fill="#555" />
        <circle cx="52" cy="30" r="2.500" fill="#555" />
        <path d="M22 40h44M34 46h20v14H34z" fill="#eef1f6" stroke="#ccd0d8" />
        <text x="46" y="85" fontSize="14" fill="#555" textAnchor="middle" fontFamily="Inter">
          DOCX
        </text>
      </>
    ),
  },
  {
    name: "Minimized Window",
    art: (
      <>
        <rect x="-3" y="3" width="94" height="82" fill="#fcfcfc" />
        <rect x="-3" y="3" width="94" height="7" fill="#333438" />
        <rect x="-3" y="10" width="94" height="12" fill="#eef1f5" />
        <rect x="8" y="12" width="8" height="2" fill="#4285f4" />
        <rect x="75" y="12" width="9" height="4" rx="1" fill="#1a73e8" />
        <path
          d="M4 19h78M26 40h52M20 44h16M40 47h16M24 52h18M22 60h52M20 68h44M20 72h40M20 76h30"
          stroke="#b8bcc2"
        />
        <g transform="translate(58 58) scale(.34)">
          <Compass />
        </g>
      </>
    ),
  },
  {
    name: "Trash",
    art: (
      <>
        <path d="M12 8l8-10 12 6 10-8 12 8 12-4 10 10v8H12z" fill="#dfe0e0" />
        <path d="M18 12l8-8 6 8M44 10l6-10 8 12M62 10l6-6 4 8" fill="none" stroke="#7a4436" strokeWidth="3" />
        <path d="M28 12l8-6 6 7" fill="none" stroke="#3aa0b4" strokeWidth="3" />
        <path d="M9 9c10 8 60 8 70 0l-7 70c-4 10-52 10-56 0z" fill="url(#gBin)" />
        <path d="M9 9c10 8 60 8 70 0" fill="none" stroke="#9a9ea0" strokeWidth="1.500" />
      </>
    ),
  },
];

function Dock() {
  return (
    <div className="flex h-[132px] shrink-0 justify-center">
      <div className="flex rounded-t-[10px] border-x-2 border-t-2 border-[#3b4254] bg-[#1b2036] px-1">
        {DOCK.map((item, i) =>
          item ? (
            <button
              key={item.name}
              aria-label={item.name}
              className="relative flex w-[108px] flex-col items-center pt-4"
            >
              <svg viewBox="0 0 88 88" className="h-[88px] w-[88px] overflow-visible">
                {item.art}
              </svg>
              {item.running && <span className="mt-[14px] h-2 w-2 rounded-full bg-[#9a9fb4]" />}
              {item.badge && (
                <span className="absolute top-[10px] right-0 flex h-[38px] min-w-[38px] items-center justify-center rounded-full bg-[#f23c37] px-[6px] font-[Inter,sans-serif] text-[20px] text-white">
                  {item.badge}
                </span>
              )}
            </button>
          ) : (
            <div key={i} className="flex w-12 justify-center pt-4">
              <div className="h-24 w-[2px] bg-[#4a5064]" />
            </div>
          ),
        )}
      </div>
    </div>
  );
}

/* ---------- macOS menu bar ---------- */

function MenuBar() {
  return (
    <header className="flex h-[46px] shrink-0 items-center border-b-2 border-[#060d1c] bg-[#1a1d26] pr-[45px] pl-10 font-[Inter,sans-serif] text-[27px] leading-8 font-medium text-white">
      <button aria-label="Apple menu">
        <FaApple className="h-9 w-[30px]" />
      </button>
      <nav className="ml-[38px] flex flex-1 gap-[37px]">
        <button className="font-bold">Safari</button>
        {MENUS.map((menu) => (
          <button key={menu}>{menu}</button>
        ))}
      </nav>
      <svg viewBox="0 0 40 32" className="h-8 w-10" fill="none" stroke="#fff" strokeWidth="3.500">
        <path d="M2 11a26 26 0 0136 0M8 17.500a17 17 0 0124 0M14 23.500a9 9 0 0112 0" />
        <circle cx="20" cy="29" r="1.500" />
      </svg>
      <span className="ml-6 text-[23px]">27%</span>
      <svg viewBox="0 0 48 26" className="ml-[10px] h-[26px] w-12">
        <rect x="1.500" y="1.500" width="40" height="23" rx="5" fill="none" stroke="#fff" strokeWidth="2" />
        <rect x="5" y="5" width="9" height="16" rx="1" fill="#fff" />
        <path d="M44 9q4 4 0 8z" fill="#fff" />
      </svg>
      <span className="ml-9 text-[28px]">Sat 12:11 PM</span>
      <svg viewBox="0 0 30 30" className="ml-11 h-[30px] w-[30px]" fill="none" stroke="#fff" strokeWidth="2.500">
        <circle cx="12" cy="12" r="9.500" />
        <path d="M19 19l9 9" strokeWidth="3.500" />
      </svg>
      <svg viewBox="0 0 88 88" className="ml-[34px] h-8 w-8">
        <SiriOrb />
      </svg>
      <svg viewBox="0 0 36 24" className="ml-6 h-6 w-9" stroke="#fff" strokeWidth="4">
        <path d="M0 3h4M7 3h29M0 12h4M7 12h23M0 21h4M7 21h29" />
      </svg>
    </header>
  );
}

function TitleBar() {
  return (
    <div className="relative flex h-11 shrink-0 items-center justify-center rounded-t-[10px] border-b-2 border-[#cfcfcf] bg-[#f6f6f6] pt-1">
      <div className="absolute left-4 flex gap-4">
        <button
          aria-label="Close"
          className="flex h-6 w-6 items-center justify-center rounded-full border border-[#cfcfcf] bg-[#dcdcdc]"
        >
          <span className="h-2 w-2 rounded-full bg-[#6b6b6b]" />
        </button>
        <button aria-label="Minimize" className="h-6 w-6 rounded-full border border-[#cfcfcf] bg-[#dcdcdc]" />
        <button aria-label="Zoom" className="h-6 w-6 rounded-full border border-[#cfcfcf] bg-[#dcdcdc]" />
      </div>
      <span className="font-[Inter,sans-serif] text-[26px] text-[#b0b0b0]">
        Output1 [Document1] - IBM SPSS Statistics Viewer
      </span>
    </div>
  );
}

export default function App() {
  return (
    <div className="flex h-screen flex-col overflow-hidden bg-[#0a1226] font-['Noto_Sans',sans-serif]">
      <Gradients />
      <MenuBar />
      <TitleBar />
      <Toolbar />
      <div className="flex min-h-0 flex-1 border-b-2 border-l-2 border-[#8d8d8d] bg-[#eee] pt-[2px] pr-[3px] pl-[2px]">
        <Outline />
        <div className="flex w-[18px] shrink-0 items-center justify-center">
          <span className="h-2 w-2 rounded-full border-2 border-[#bbb] bg-white" />
        </div>
        <OutputPane />
      </div>
      <StatusBar />
      <Dock />
    </div>
  );
}
